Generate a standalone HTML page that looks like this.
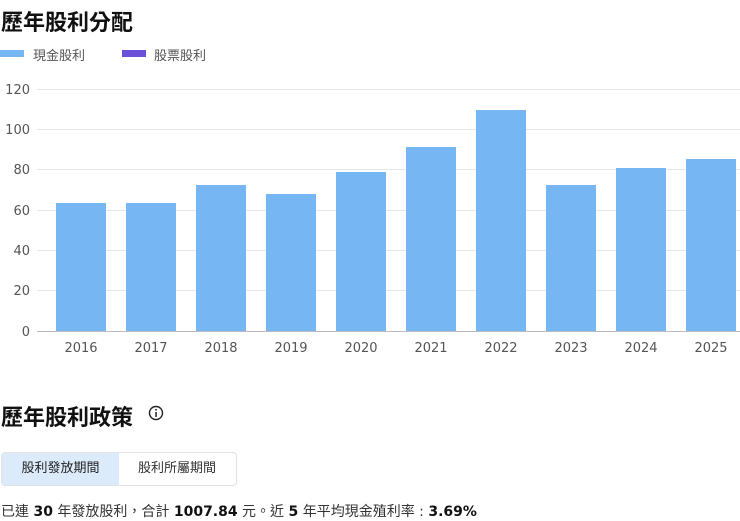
<!DOCTYPE html><html><head><meta charset="utf-8"><style>
body{margin:0;width:740px;height:519px;background:#fff;font-family:"DejaVu Sans","Noto Sans CJK TC",sans-serif;color:#111;position:relative;overflow:hidden}
.a{position:absolute;white-space:nowrap}
h1{position:absolute;margin:0;font-size:22px;font-weight:700;left:1px}
.tab{position:absolute;top:452px;height:32px;line-height:32px;font-size:13px;text-align:center;color:#333}
</style></head><body>
<h1 style="top:5px">歷年股利分配</h1>
<div class="a" style="left:0;top:50px;width:24px;height:7px;background:#76b6f3"></div>
<div class="a" style="left:33px;top:45px;font-size:13px;color:#555">現金股利</div>
<div class="a" style="left:122px;top:50px;width:24px;height:7px;background:#6a50d8"></div>
<div class="a" style="left:154px;top:45px;font-size:13px;color:#555">股票股利</div>
<svg class="a" style="left:0;top:0" width="740" height="370" font-family="DejaVu Sans,sans-serif" font-size="13" fill="#555">
<g stroke="#e6e6e6"><line x1="37" x2="740" y1="89.5" y2="89.5"/><line x1="37" x2="740" y1="129.5" y2="129.5"/><line x1="37" x2="740" y1="169.5" y2="169.5"/><line x1="37" x2="740" y1="210.5" y2="210.5"/><line x1="37" x2="740" y1="250.5" y2="250.5"/><line x1="37" x2="740" y1="290.5" y2="290.5"/></g>
<line x1="37" x2="740" y1="331.5" y2="331.5" stroke="#bbb"/>
<g text-anchor="end"><text x="30" y="94">120</text><text x="30" y="134">100</text><text x="30" y="174">80</text><text x="30" y="215">60</text><text x="30" y="255">40</text><text x="30" y="295">20</text><text x="30" y="336">0</text></g>
<g fill="#76b6f3"><rect x="56" y="203" width="50" height="128"/><rect x="126" y="203" width="50" height="128"/><rect x="196" y="185" width="50" height="146"/><rect x="266" y="194" width="50" height="137"/><rect x="336" y="172" width="50" height="159"/><rect x="406" y="147" width="50" height="184"/><rect x="476" y="110" width="50" height="221"/><rect x="546" y="185" width="50" height="146"/><rect x="616" y="168" width="50" height="163"/><rect x="686" y="159" width="50" height="172"/></g>
<g text-anchor="middle"><text x="81" y="352">2016</text><text x="151" y="352">2017</text><text x="221" y="352">2018</text><text x="291" y="352">2019</text><text x="361" y="352">2020</text><text x="431" y="352">2021</text><text x="501" y="352">2022</text><text x="571" y="352">2023</text><text x="641" y="352">2024</text><text x="711" y="352">2025</text></g>
</svg>
<h1 style="top:400px">歷年股利政策</h1>
<svg class="a" style="left:148px;top:405px" width="16" height="16"><circle cx="8" cy="8" r="6.5" fill="none" stroke="#222" stroke-width="1.4"/><rect x="7.3" y="7" width="1.5" height="5" fill="#222"/><circle cx="8" cy="4.8" r="0.9" fill="#222"/></svg>
<div class="a" style="left:1px;top:452px;width:234px;height:32px;border:1px solid #e2e2e2;border-radius:4px"></div>
<div class="tab" style="left:2px;top:453px;width:117px;background:#dcebfb;color:#222">股利發放期間</div>
<div class="tab" style="left:119px;top:453px;width:116px">股利所屬期間</div>
<div class="a" style="left:1px;top:501px;font-size:14px;color:#333">已連 <b style="color:#111">30</b> 年發放股利，合計 <b style="color:#111">1007.84</b> 元。近 <b style="color:#111">5</b> 年平均現金殖利率 : <b style="color:#111">3.69%</b></div>
</body></html>
